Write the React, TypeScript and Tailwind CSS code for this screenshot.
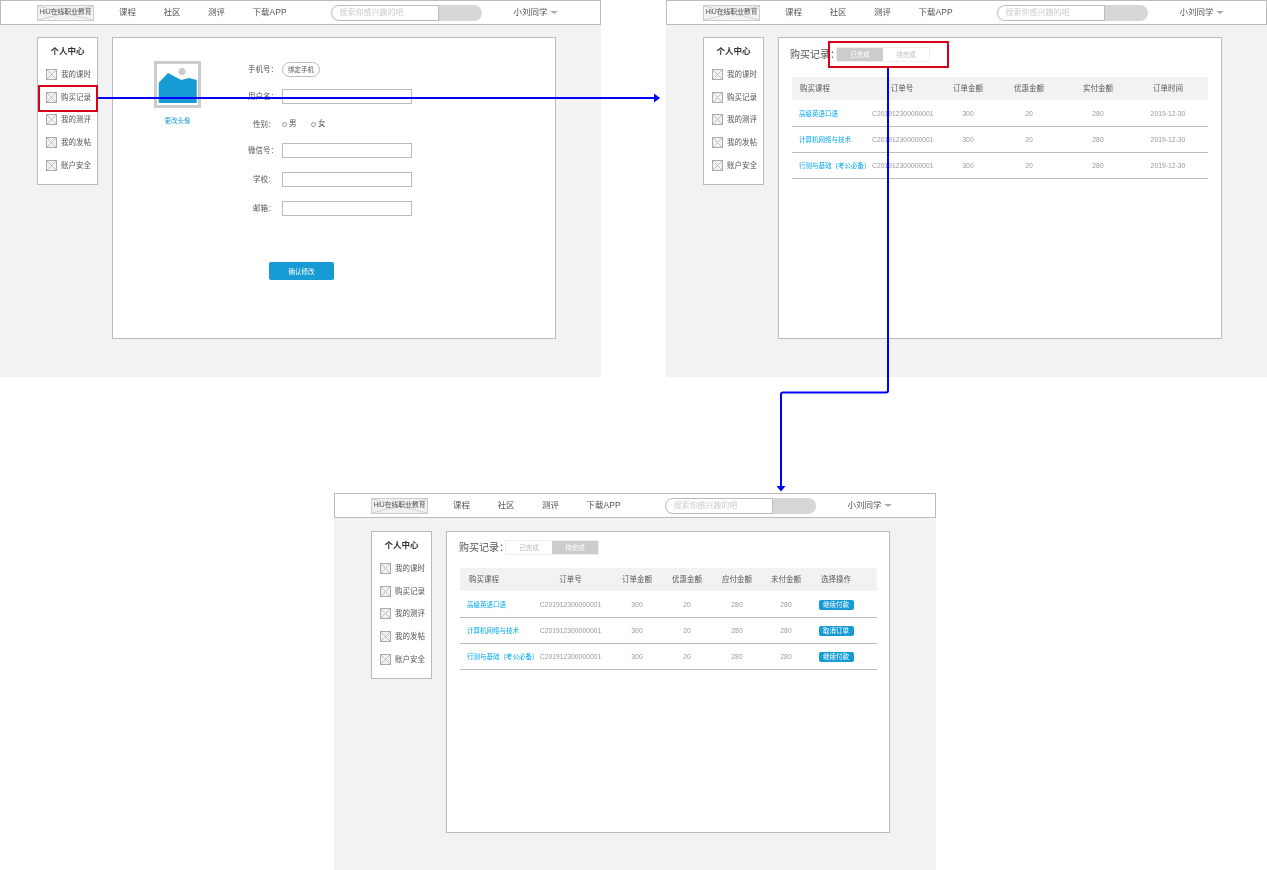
const menu = ["我的课时", "购买记录", "我的测评", "我的发帖", "账户安全"];
const nav = ["课程", "社区", "测评", "下载APP"];

const doneRows = [
  ["高级英语口语", "C201912300000001", "300", "20", "280", "2019-12-30"],
  ["计算机网络与技术", "C201912300000001", "300", "20", "280", "2019-12-30"],
  ["行测与基础（考公必备）", "C201912300000001", "300", "20", "280", "2019-12-30"],
];

const pendingRows = [
  ["高级英语口语", "C201912300000001", "300", "20", "280", "280", "继续付款"],
  ["计算机网络与技术", "C201912300000001", "300", "20", "280", "280", "取消订单"],
  ["行测与基础（考公必备）", "C201912300000001", "300", "20", "280", "280", "继续付款"],
];

const BoxIcon = () => (
  <svg width="11" height="11" viewBox="0 0 11 11" className="shrink-0">
    <rect x="0.5" y="0.5" width="10" height="10" fill="#f2f2f2" stroke="#aaa" />
    <path d="M0.5 0.5L10.5 10.5M10.5 0.5L0.5 10.5" stroke="#aaa" strokeWidth="0.7" />
  </svg>
);

const Logo = () => (
  <div className="relative flex h-4 w-[57px] shrink-0 items-center justify-center border border-[#ccc] bg-[#f2f2f2]">
    <svg className="absolute inset-0 h-full w-full" viewBox="0 0 55 14" preserveAspectRatio="none">
      <path d="M0 0L55 14M55 0L0 14" stroke="#bbb" strokeWidth="0.6" />
    </svg>
    <span className="relative whitespace-nowrap text-[6.8px] text-[#555]">HiU在线职业教育</span>
  </div>
);

const Header = () => (
  <div className="flex h-[25px] items-center border border-[#bbb] bg-white pl-[36px] text-[8.5px] text-[#555]">
    <Logo />
    <div className="ml-[25px] flex gap-[27.5px] whitespace-nowrap">
      {nav.map((item) => (
        <span key={item}>{item}</span>
      ))}
    </div>
    <div className="ml-[44px] flex h-4 w-[151px] overflow-hidden rounded-full bg-[#d7d7d7]">
      <div className="flex w-[108px] items-center rounded-l-full border border-[#bbb] bg-white pl-2 text-[8px] text-[#ccc]">
        搜索你感兴趣的吧
      </div>
    </div>
    <div className="ml-[32px] flex items-center gap-[2px] whitespace-nowrap">
      <span>小刘同学</span>
      <span className="h-0 w-0 border-x-[4px] border-t-[3px] border-x-transparent border-t-[#aaa]" />
    </div>
  </div>
);

const Sidebar = () => (
  <div className="h-[148px] w-[61px] shrink-0 border border-[#bbb] bg-white pt-[7px]">
    <div className="h-3 text-center text-[8.5px] leading-3 font-bold text-[#333]">个人中心</div>
    <div className="mt-[6px]">
      {menu.map((item) => (
        <div key={item} className="flex h-[22.75px] items-center gap-[4px] pl-2 text-[7.5px] text-[#555]">
          <BoxIcon />
          <span className="whitespace-nowrap">{item}</span>
        </div>
      ))}
    </div>
  </div>
);

const Screen = ({
  className,
  bodyClass,
  children,
}: {
  className: string;
  bodyClass: string;
  children: React.ReactNode;
}) => (
  <div className={`absolute flex h-[377px] flex-col bg-[#f2f2f2] blur-[0.3px] ${className}`}>
    <Header />
    <div className={`flex gap-[14px] pl-[37px] ${bodyClass}`}>
      <Sidebar />
      <div className="h-[302px] w-[444px] border border-[#bbb] bg-white">{children}</div>
    </div>
  </div>
);

const Label = ({ text }: { text: string }) => (
  <span
    className={
      text.length === 2
        ? "w-[27px] pt-[1px] pl-[5px] text-left text-[7.5px] whitespace-nowrap text-[#555]"
        : "w-[27px] pt-[1px] text-left text-[7.5px] whitespace-nowrap text-[#555]"
    }
  >
    {text}：
  </span>
);

const Field = ({ label }: { label: string }) => (
  <div className="flex h-[15px] items-center">
    <Label text={label} />
    <div className="ml-[7px] h-[15px] w-[130px] border border-[#bbb] bg-white" />
  </div>
);

const Radio = ({ label }: { label: string }) => (
  <div className="flex w-[29px] items-center gap-[2px] text-[7.5px] text-[#555]">
    <span className="h-[5px] w-[5px] rounded-full border border-[#999]" />
    <span>{label}</span>
  </div>
);

const ProfilePanel = () => (
  <div className="flex pl-[41px]">
    <div className="mt-[23px] flex w-[47px] flex-col items-center">
      <svg width="47" height="47" viewBox="0 0 47 47">
        <rect x="1.5" y="1.5" width="44" height="44" fill="#fff" stroke="#ccc" strokeWidth="3" />
        <circle cx="28" cy="10.5" r="3.5" fill="#ccc" />
        <path d="M4.7 21.7L14 12L27.3 19L35 17L42.7 19V42H4.7Z" fill="#169bd5" />
      </svg>
      <span className="mt-[8px] text-[6.5px] whitespace-nowrap text-[#169bd5]">更改头像</span>
    </div>
    <div className="mt-6 ml-[47px] flex flex-col">
      <div className="flex h-[15px] items-center">
        <Label text="手机号" />
        <span className="ml-[7px] flex h-[15px] w-[38px] items-center justify-center rounded-full border border-[#bbb] text-[6.5px] text-[#555]">
          绑定手机
        </span>
      </div>
      <div className="mt-3">
        <Field label="用户名" />
      </div>
      <div className="mt-3 flex h-[15px] items-center pt-[1px]">
        <Label text="性别" />
        <div className="ml-[7px] flex">
          <Radio label="男" />
          <Radio label="女" />
        </div>
      </div>
      <div className="mt-3">
        <Field label="微信号" />
      </div>
      <div className="mt-[14px]">
        <Field label="学校" />
      </div>
      <div className="mt-[14px]">
        <Field label="邮箱" />
      </div>
      <button className="mt-[46px] ml-[21px] h-[18px] w-[65px] rounded-[2px] bg-[#169bd5] pt-[1px] text-[6.5px] text-white">
        确认修改
      </button>
    </div>
  </div>
);

const Tabs = ({ active }: { active: 0 | 1 }) => (
  <div className="flex h-[15px] w-[94px] border border-[#eee] text-[6.5px]">
    {["已完成", "待完成"].map((tab, i) => (
      <div
        key={tab}
        className={
          i === active
            ? "flex flex-1 items-center justify-center bg-[#ccc] text-white"
            : "flex flex-1 items-center justify-center bg-white text-[#bbb]"
        }
      >
        {tab}
      </div>
    ))}
  </div>
);

const DonePanel = () => (
  <div className="pt-[9px] pl-[11px]">
    <div className="flex items-center">
      <span className="w-[46px] text-[10px] whitespace-nowrap text-[#555]">购买记录：</span>
      <Tabs active={0} />
    </div>
    <div className="mt-[15px] ml-[2px] w-[416px]">
      <div className="mb-[1px] grid h-[23px] grid-cols-[80px_60px_72px_50px_88px_52px_14px] items-center bg-[#f2f2f2] text-center text-[7.5px] text-[#555]">
        <span className="pl-2 text-left whitespace-nowrap">购买课程</span>
        <span>订单号</span>
        <span>订单金额</span>
        <span>优惠金额</span>
        <span>实付金额</span>
        <span>订单时间</span>
      </div>
      {doneRows.map((row) => (
        <div
          key={row[0]}
          className="grid h-[26px] grid-cols-[80px_60px_72px_50px_88px_52px_14px] items-center border-b border-[#bbb] pt-[1px] text-center text-[6.8px] text-[#999]"
        >
          <span className="pl-[7px] text-left text-[6.5px] whitespace-nowrap text-[#02a7f0]">{row[0]}</span>
          {row.slice(1).map((cell, i) => (
            <span key={i} className="whitespace-nowrap">
              {cell}
            </span>
          ))}
        </div>
      ))}
    </div>
  </div>
);

const PendingPanel = () => (
  <div className="pt-2 pl-3">
    <div className="flex items-center">
      <span className="w-[46px] text-[10px] whitespace-nowrap text-[#555]">购买记录：</span>
      <Tabs active={1} />
    </div>
    <div className="mt-[13px] ml-[1px] w-[417px]">
      <div className="mb-[1px] grid h-[23px] grid-cols-[73px_75px_58px_42px_58px_40px_60px_11px] items-center bg-[#f2f2f2] text-center text-[7.5px] text-[#555]">
        <span className="pl-[9px] text-left whitespace-nowrap">购买课程</span>
        <span>订单号</span>
        <span>订单金额</span>
        <span>优惠金额</span>
        <span>应付金额</span>
        <span>未付金额</span>
        <span>选择操作</span>
      </div>
      {pendingRows.map((row) => (
        <div
          key={row[0]}
          className="grid h-[26px] grid-cols-[73px_75px_58px_42px_58px_40px_60px_11px] items-center border-b border-[#bbb] pt-[1px] text-center text-[6.8px] text-[#999]"
        >
          <span className="pl-[7px] text-left text-[6.5px] whitespace-nowrap text-[#02a7f0]">{row[0]}</span>
          {row.slice(1, 6).map((cell, i) => (
            <span key={i} className="whitespace-nowrap">
              {cell}
            </span>
          ))}
          <span className="mx-auto flex h-[10px] w-[35px] items-center justify-center rounded-[2px] bg-[#169bd5] text-[6.5px] text-white">
            {row[6]}
          </span>
        </div>
      ))}
    </div>
  </div>
);

export default function App() {
  return (
    <div className="relative h-[870px] w-[1267px] overflow-hidden bg-white font-['Liberation_Sans','Noto_Sans_CJK_SC',sans-serif]">
      <Screen className="top-0 left-0 w-[601px]" bodyClass="pt-3">
        <ProfilePanel />
      </Screen>
      <Screen className="top-0 left-[666px] w-[601px]" bodyClass="pt-3">
        <DonePanel />
      </Screen>
      <Screen className="top-[493px] left-[334px] w-[602px]" bodyClass="pt-[13px]">
        <PendingPanel />
      </Screen>

      {/* red highlights */}
      <div className="absolute top-[85px] left-[38px] h-[27px] w-[60px] border-2 border-[#d9001b]" />
      <div className="absolute top-[41px] left-[828px] h-[27px] w-[121px] border-2 border-[#d9001b]" />

      {/* connectors */}
      <svg className="pointer-events-none absolute inset-0" width="1267" height="870" viewBox="0 0 1267 870">
        <path d="M98 98H655" stroke="#0000ff" strokeWidth="2" fill="none" />
        <path d="M654 93.5L660 98L654 102.5Z" fill="#0000ff" />
        <path d="M888 68V390.5Q888 392.5 886 392.5H783Q781 392.5 781 394.5V487" stroke="#0000ff" strokeWidth="2" fill="none" />
        <path d="M776.5 486H785.5L781 491.5Z" fill="#0000ff" />
      </svg>
    </div>
  );
}
